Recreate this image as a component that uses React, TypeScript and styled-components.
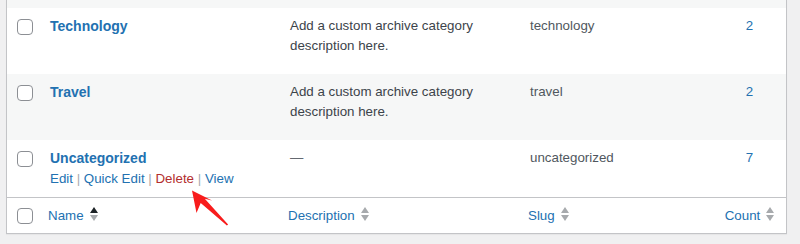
import styled, { createGlobalStyle } from 'styled-components';

const GlobalStyle = createGlobalStyle`
  body {
    margin: 0;
    background: #f0f0f1;
    font-family: "Liberation Sans", Arial, sans-serif;
    font-size: 13.33px;
    line-height: 20px;
    color: #3c434a;
  }
`;

const columns = '33px 240px 240px 193px 1fr';

const Page = styled.div`
  position: relative;
  height: 244px;
  overflow: hidden;
  padding-left: 6px;
`;

const Table = styled.div`
  width: 781px;
  box-sizing: border-box;
  background: #fff;
  border: 1px solid #c3c4c7;
  border-top: none;
  box-shadow: 0 1px 1px rgba(0, 0, 0, 0.04);
`;

const Row = styled.div<{ $striped?: boolean; $height: number }>`
  display: grid;
  grid-template-columns: ${columns};
  min-height: ${(p) => p.$height}px;
  background: ${(p) => (p.$striped ? '#f6f7f7' : '#fff')};
`;

const FooterRow = styled.div`
  display: grid;
  grid-template-columns: ${columns};
  height: 35px;
  border-top: 1px solid #c3c4c7;
`;

const CheckCell = styled.div<{ $top: number }>`
  padding: ${(p) => p.$top}px 0 0 10px;
`;

const Checkbox = styled.span`
  display: block;
  width: 16px;
  height: 16px;
  box-sizing: border-box;
  border: 1px solid #8c8f94;
  border-radius: 4px;
  background: #fff;
`;

const Cell = styled.div<{ $center?: boolean; $muted?: boolean }>`
  padding: 8px 10px;
  text-align: ${(p) => (p.$center ? 'center' : 'left')};
  color: ${(p) => (p.$muted ? '#50575e' : '#3c434a')};
`;

const Dash = styled.span`
  color: #646970;
`;

const RowTitle = styled.a`
  display: block;
  font-size: 14px;
  line-height: 21px;
  font-weight: 700;
  color: #2271b1;
  text-decoration: none;
`;

const RowActions = styled.div<{ $hidden?: boolean }>`
  color: #a7aaad;
  visibility: ${(p) => (p.$hidden ? 'hidden' : 'visible')};
`;

const Action = styled.a<{ $danger?: boolean }>`
  color: ${(p) => (p.$danger ? '#b32d2e' : '#2271b1')};
  text-decoration: none;
`;

const CountLink = styled.a`
  color: #2271b1;
  text-decoration: none;
`;

const HeadCell = styled.div<{ $center?: boolean }>`
  padding: 8px;
  display: flex;
  justify-content: ${(p) => (p.$center ? 'center' : 'flex-start')};
`;

const SortLink = styled.a`
  display: inline-flex;
  align-items: flex-start;
  gap: 6px;
  color: #2271b1;
  text-decoration: none;
`;

const SortIcon = styled.svg`
  margin-top: 1px;
  flex: none;
`;

const Arrow = styled.svg`
  position: absolute;
  left: 180px;
  top: 180px;
`;

const Sort = ({ active }: { active?: boolean }) => (
  <SortIcon width="8" height="14" viewBox="0 0 8 14">
    <polygon points="0,6 4,0 8,6" fill={active ? '#1d2327' : '#a7aaad'} />
    <polygon points="0,8 8,8 4,14" fill="#a7aaad" />
  </SortIcon>
);

type Term = {
  name: string;
  description: string;
  slug: string;
  count: number;
  striped?: boolean;
  height: number;
  showActions?: boolean;
};

const terms: Term[] = [
  {
    name: 'Technology',
    description: 'Add a custom archive category description here.',
    slug: 'technology',
    count: 2,
    height: 66,
  },
  {
    name: 'Travel',
    description: 'Add a custom archive category description here.',
    slug: 'travel',
    count: 2,
    striped: true,
    height: 66,
  },
  {
    name: 'Uncategorized',
    description: '',
    slug: 'uncategorized',
    count: 7,
    height: 57,
    showActions: true,
  },
];

export default function App() {
  return (
    <Page>
      <GlobalStyle />
      <Table>
        <Row $striped $height={8} />
        {terms.map((t) => (
          <Row key={t.slug} $striped={t.striped} $height={t.height}>
            <CheckCell $top={11}>
              <Checkbox />
            </CheckCell>
            <Cell>
              <RowTitle>{t.name}</RowTitle>
              <RowActions $hidden={!t.showActions}>
                <Action>Edit</Action> | <Action>Quick Edit</Action> |{' '}
                <Action $danger>Delete</Action> | <Action>View</Action>
              </RowActions>
            </Cell>
            <Cell>{t.description || <Dash>—</Dash>}</Cell>
            <Cell $muted>{t.slug}</Cell>
            <Cell $center>
              <CountLink>{t.count}</CountLink>
            </Cell>
          </Row>
        ))}
        <FooterRow>
          <CheckCell $top={10}>
            <Checkbox />
          </CheckCell>
          <HeadCell>
            <SortLink>
              Name <Sort active />
            </SortLink>
          </HeadCell>
          <HeadCell>
            <SortLink>
              Description <Sort />
            </SortLink>
          </HeadCell>
          <HeadCell>
            <SortLink>
              Slug <Sort />
            </SortLink>
          </HeadCell>
          <HeadCell $center>
            <SortLink>
              Count <Sort />
            </SortLink>
          </HeadCell>
        </FooterRow>
      </Table>
      <Arrow width="56" height="56" viewBox="0 0 56 56">
        <polygon
          points="12,10.5 32,20.5 24.8,18.8 48.1,44.4 46.9,45.6 20.7,23.1 16.5,33"
          fill="#f81c1c"
        />
      </Arrow>
    </Page>
  );
}
